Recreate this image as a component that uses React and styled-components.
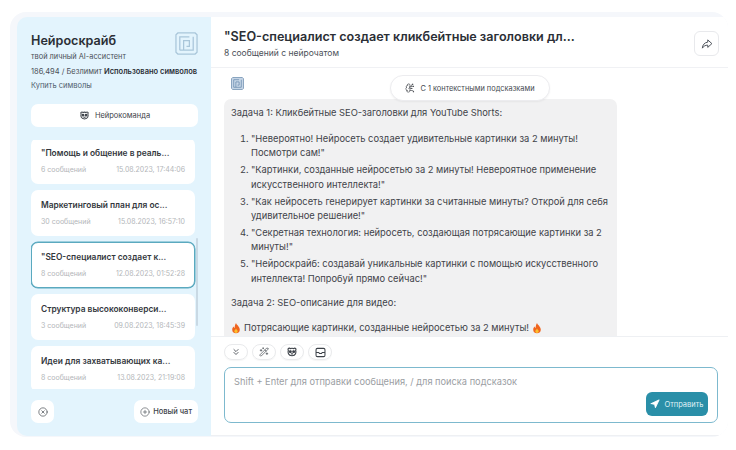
import React from "react";
import styled, { createGlobalStyle } from "styled-components";
import { ChevronsDown, WandSparkles, Navigation, CirclePlus, CircleX, BrainCircuit } from "lucide-react";

const GlobalStyle = createGlobalStyle`
  html, body {
    margin: 0;
    background: #fff;
    font-family: Inter, "Noto Sans", sans-serif;
  }
  * {
    box-sizing: border-box;
  }
`;

const Page = styled.div`
  width: 736px;
  height: 450px;
  padding: 12px 8px 13px 10px;
  overflow: hidden;
`;

const Frame = styled.div`
  height: 100%;
  padding: 5px 0 1px 7px;
  display: flex;
  background: #f5f7fb;
  border-radius: 16px;
  overflow: hidden;
`;

const Sidebar = styled.aside`
  width: 194px;
  flex-shrink: 0;
  padding: 15px 13px 13px 14px;
  display: flex;
  flex-direction: column;
  background: #e3f4fd;
  border-radius: 10px 0 0 10px;
`;

const Brand = styled.div`
  display: flex;
  justify-content: space-between;
  align-items: flex-start;
  width: 167px;
`;

const BrandTitle = styled.h1`
  margin: 0;
  font-size: 12.6px;
  line-height: 17px;
  font-weight: 600;
  color: #2b2f36;
`;

const BrandTag = styled.div`
  margin-top: 3px;
  font-size: 7.4px;
  line-height: 10px;
  color: #4b5058;
`;

const Usage = styled.div`
  margin-top: 5px;
  font-size: 7.5px;
  line-height: 10px;
  white-space: nowrap;
  color: #4b5058;

  b {
    font-weight: 600;
    color: #2b2f36;
  }
`;

const BuyLink = styled.div`
  margin-top: 4px;
  font-size: 7.5px;
  line-height: 10px;
  color: #51606d;
`;

const TeamButton = styled.div`
  height: 23px;
  width: 167px;
  margin-top: 13px;
  display: flex;
  align-items: center;
  justify-content: center;
  gap: 5px;
  background: #fff;
  border-radius: 7px;
  font-size: 7.5px;
  color: #3d4249;
`;

const ChatListWrap = styled.div`
  position: relative;
  margin-top: 13px;
  height: 249px;
  overflow: hidden;
`;

const ChatList = styled.div`
  display: flex;
  flex-direction: column;
  gap: 6.5px;
  width: 164px;
  margin-top: -2px;
`;

const ScrollThumb = styled.div`
  position: absolute;
  left: 165px;
  top: 98px;
  width: 2px;
  height: 88px;
  background: #c9d9e4;
  border-radius: 1px;
`;

const ChatCard = styled.div`
  height: 45.5px;
  padding: ${(p) => (p.$active ? "8px 9px 0" : "9px 10px 0")};
  background: #fff;
  border-radius: 7px;
  border: ${(p) => (p.$active ? "1px solid #5aa9bf" : "none")};
  box-shadow: ${(p) => (p.$active ? "0 0 0 0.5px #5aa9bf" : "none")};
`;

const ChatTitle = styled.div`
  font-size: 8.4px;
  line-height: 12px;
  font-weight: 600;
  color: #33373d;
  white-space: nowrap;
`;

const ChatMeta = styled.div`
  margin-top: 6px;
  display: flex;
  justify-content: space-between;
  font-size: 7px;
  line-height: 10px;
  color: #b3b6b9;
`;

const SidebarFooter = styled.div`
  margin-top: auto;
  display: flex;
  justify-content: space-between;
  width: 167px;
`;

const FooterButton = styled.div`
  height: 23px;
  padding: 0 ${(p) => (p.$square ? "0" : "6px")};
  width: ${(p) => (p.$square ? "23px" : "auto")};
  display: flex;
  align-items: center;
  justify-content: center;
  gap: 3px;
  background: #fff;
  border-radius: 7px;
  font-size: 7.5px;
  font-weight: 500;
  color: #3d4249;
`;

const Main = styled.main`
  flex: 1;
  min-width: 0;
  display: flex;
  flex-direction: column;
  background: #fff;
  border-bottom: 1px solid #eef0f3;
`;

const ChatHeader = styled.header`
  height: 51px;
  flex-shrink: 0;
  padding: 11px 9px 0 13px;
  display: flex;
  justify-content: space-between;
  border-bottom: 1px solid #f0f1f4;
`;

const HeaderTitle = styled.h2`
  margin: 0;
  font-size: 12.6px;
  line-height: 17px;
  font-weight: 600;
  color: #2b2f36;
  white-space: nowrap;
`;

const HeaderSub = styled.div`
  margin-top: 3px;
  font-size: 8.5px;
  line-height: 11px;
  color: #4b5058;
`;

const ShareButton = styled.div`
  width: 25px;
  height: 25px;
  margin-top: 3px;
  display: flex;
  align-items: center;
  justify-content: center;
  border: 1px solid #e8e9ec;
  border-radius: 6px;
  color: #4b5058;
`;

const Messages = styled.div`
  position: relative;
  flex: 1;
  min-height: 0;
  padding: 9px 0 0 13px;
  overflow: hidden;
`;

const HintPill = styled.div`
  position: absolute;
  left: 179px;
  top: 7px;
  width: 160px;
  height: 26px;
  z-index: 1;
  display: flex;
  align-items: center;
  justify-content: center;
  gap: 5px;
  background: #fff;
  border: 1px solid #ececef;
  border-radius: 13px;
  box-shadow: 0 1px 2px rgba(0, 0, 0, 0.05);
  font-size: 7.4px;
  color: #45494f;
`;

const MessageIcon = styled.div`
  height: 13px;
  margin-left: 7px;

  svg {
    display: block;
  }
`;

const Bubble = styled.div`
  width: 393px;
  margin-top: 9px;
  padding: 7px 7px 12px;
  background: #f1f1f2;
  border-radius: 7px 7px 0 0;
  font-size: 9.33px;
  line-height: 14.4px;
  color: #3f4349;

  p {
    margin: 0;
  }
`;

const TaskList = styled.ol`
  margin: 11.6px 0 0;
  padding: 0 0 0 20px;

  li {
    margin-bottom: 2.5px;
  }
`;

const TaskTwo = styled.p`
  margin-top: 10px !important;
`;

const FlameLine = styled.p`
  margin-top: 10.6px !important;
  display: flex;
  align-items: center;
  gap: 3px;
`;

const Composer = styled.div`
  height: 99px;
  flex-shrink: 0;
  padding: 7px 10px 0 13px;
  border-top: 1px solid #eef0f3;
`;

const ToolRow = styled.div`
  display: flex;
  gap: 4px;
`;

const ToolButton = styled.div`
  width: 24px;
  height: 16px;
  display: flex;
  align-items: center;
  justify-content: center;
  border: 1px solid #e9eaec;
  border-radius: 8px;
  box-shadow: 0 1px 1px rgba(0, 0, 0, 0.04);
  color: #3d4249;
`;

const InputBox = styled.div`
  height: 56px;
  margin-top: 7px;
  padding: 7px 9px 0;
  position: relative;
  border: 1px solid #7db9ce;
  border-radius: 7px;
  font-size: 9.25px;
  line-height: 13px;
  color: #9b9ea3;
`;

const SendButton = styled.div`
  position: absolute;
  right: 9px;
  bottom: 6px;
  width: 62px;
  height: 24px;
  display: flex;
  align-items: center;
  justify-content: center;
  gap: 4px;
  background: #2a8fa8;
  border-radius: 6px;
  font-size: 7.5px;
  color: #dff1f6;
`;

const LogoMark = ({ size, color, fill }) => (
  <svg width={size} height={size} viewBox="0 0 24 24" fill={fill || "none"} stroke={color} strokeWidth="1.3">
    <path d="M3 1h18l2 2v18l-2 2H3l-2-2V3z" />
    <path d="M5 19V5h10M19 5v14H9M5 19h4M9 19V9h6v6h-3" fill="none" />
  </svg>
);

const BearIcon = ({ size }) => (
  <svg width={size} height={size} viewBox="0 0 16 16" fill="none" stroke="#3d4249" strokeWidth="1.5">
    <path d="M3 3.5c1-1 2-.6 2.6 0C7 3 9 3 10.4 3.5c.6-.6 1.6-1 2.6 0 .6.8.3 1.6-.1 2.2.8 2.8.4 7.3-4.9 7.3S2.300 8.500 3.100 5.700C2.700 5.100 2.400 4.300 3 3.500z" />
    <circle cx="5.8" cy="7.5" r="1.2" fill="#3d4249" />
    <circle cx="10.2" cy="7.5" r="1.2" fill="#3d4249" />
    <path d="M6.5 10.5h3" />
  </svg>
);

const PanelIcon = () => (
  <svg width="11" height="11" viewBox="0 0 16 16" fill="none" stroke="#3d4249" strokeWidth="1.5">
    <rect x="1.5" y="2" width="13" height="12" rx="2" />
    <path d="M1.5 8h4l1 1.5h3L10.5 8h4" />
  </svg>
);

const ShareIcon = () => (
  <svg width="12" height="12" viewBox="0 0 16 16" fill="none" stroke="#4b5058" strokeWidth="1.3" strokeLinejoin="round">
    <path d="M9 2.5l5.5 5-5.500 5V9.500C6 9.500 3.500 10.800 1.800 13.500 2 9.500 4.500 6 9 5.500z" />
  </svg>
);

const Flame = () => (
  <svg width="10" height="11" viewBox="0 0 12 14">
    <path d="M6 0c.6 2.400 4.800 4.400 4.800 8.400A4.800 4.800 0 0 1 1.200 8.400C1.200 6.500 2.200 5.200 3 4.500c.1 1 .5 1.700 1.200 2C4.400 4.200 4.700 2 6 0z" fill="#f0641e" />
    <path d="M6 7c.3 1.200 2.200 1.800 2.200 3.600a2.200 2.200 0 0 1-4.400 0C3.800 9 5.500 8.500 6 7z" fill="#fbc02d" />
  </svg>
);

const chats = [
  { id: 1, title: "\"Помощь и общение в реаль...", count: "6 сообщений", date: "15.08.2023, 17:44:06" },
  { id: 2, title: "Маркетинговый план для ос...", count: "30 сообщений", date: "15.08.2023, 16:57:10" },
  { id: 3, title: "\"SEO-специалист создает к...", count: "8 сообщений", date: "12.08.2023, 01:52:28", active: true },
  { id: 4, title: "Структура высококонверси...", count: "3 сообщений", date: "09.08.2023, 18:45:39" },
  { id: 5, title: "Идеи для захватывающих ка...", count: "8 сообщений", date: "13.08.2023, 21:19:08" },
];

const tasks = [
  "\"Невероятно! Нейросеть создает удивительные картинки за 2 минуты! Посмотри сам!\"",
  "\"Картинки, созданные нейросетью за 2 минуты! Невероятное применение искусственного интеллекта!\"",
  "\"Как нейросеть генерирует картинки за считанные минуты? Открой для себя удивительное решение!\"",
  "\"Секретная технология: нейросеть, создающая потрясающие картинки за 2 минуты!\"",
  "\"Нейроскрайб: создавай уникальные картинки с помощью искусственного интеллекта! Попробуй прямо сейчас!\"",
];

const App = () => {
  return (
    <Page>
      <GlobalStyle />
      <Frame>
        <Sidebar>
          <Brand>
            <div>
              <BrandTitle>Нейроскрайб</BrandTitle>
              <BrandTag>твой личный AI-ассистент</BrandTag>
            </div>
            <LogoMark size={23} color="#a9c6da" />
          </Brand>
          <Usage>
            186,494 / Безлимит <b>Использовано символов</b>
          </Usage>
          <BuyLink>Купить символы</BuyLink>
          <TeamButton>
            <BearIcon size={11} />
            Нейрокоманда
          </TeamButton>
          <ChatListWrap>
            <ChatList>
              {chats.map((chat) => (
                <ChatCard key={chat.id} $active={chat.active}>
                  <ChatTitle>{chat.title}</ChatTitle>
                  <ChatMeta>
                    <span>{chat.count}</span>
                    <span>{chat.date}</span>
                  </ChatMeta>
                </ChatCard>
              ))}
            </ChatList>
            <ScrollThumb />
          </ChatListWrap>
          <SidebarFooter>
            <FooterButton $square>
              <CircleX size={10} strokeWidth={1.6} />
            </FooterButton>
            <FooterButton>
              <CirclePlus size={10} strokeWidth={1.4} />
              Новый чат
            </FooterButton>
          </SidebarFooter>
        </Sidebar>
        <Main>
          <ChatHeader>
            <div>
              <HeaderTitle>"SEO-специалист создает кликбейтные заголовки дл...</HeaderTitle>
              <HeaderSub>8 сообщений с нейрочатом</HeaderSub>
            </div>
            <ShareButton>
              <ShareIcon />
            </ShareButton>
          </ChatHeader>
          <Messages>
            <MessageIcon>
              <LogoMark size={13} color="#5f83a8" fill="#c9d8e8" />
            </MessageIcon>
            <HintPill>
              <BrainCircuit size={10} strokeWidth={1.6} />С 1 контекстными подсказками
            </HintPill>
            <Bubble>
              <p>Задача 1: Кликбейтные SEO-заголовки для YouTube Shorts:</p>
              <TaskList>
                {tasks.map((task) => (
                  <li key={task}>{task}</li>
                ))}
              </TaskList>
              <TaskTwo>Задача 2: SEO-описание для видео:</TaskTwo>
              <FlameLine>
                <Flame />
                Потрясающие картинки, созданные нейросетью за 2 минуты!
                <Flame />
              </FlameLine>
            </Bubble>
          </Messages>
          <Composer>
            <ToolRow>
              <ToolButton>
                <ChevronsDown size={10} strokeWidth={2} />
              </ToolButton>
              <ToolButton>
                <WandSparkles size={10} strokeWidth={1.6} />
              </ToolButton>
              <ToolButton>
                <BearIcon size={12} />
              </ToolButton>
              <ToolButton>
                <PanelIcon />
              </ToolButton>
            </ToolRow>
            <InputBox>
              Shift + Enter для отправки сообщения, / для поиска подсказок
              <SendButton>
                <Navigation size={10} strokeWidth={2} fill="#fff" color="#fff" />
                Отправить
              </SendButton>
            </InputBox>
          </Composer>
        </Main>
      </Frame>
    </Page>
  );
};

export default App;
